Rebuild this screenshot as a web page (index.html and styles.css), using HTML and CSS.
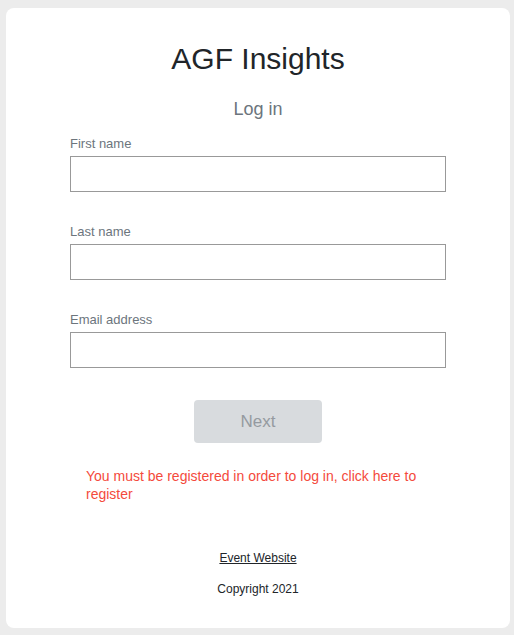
FILE: index.html
```html
<!DOCTYPE html>
<html>
<head>
<meta charset="utf-8">
<link rel="stylesheet" href="styles.css">
</head>
<body>
<main class="card">
  <h1 class="title">AGF Insights</h1>
  <h2 class="subtitle">Log in</h2>
  <form class="form">
    <div class="field">
      <label class="label">First name</label>
      <input class="input" type="text">
    </div>
    <div class="field">
      <label class="label">Last name</label>
      <input class="input" type="text">
    </div>
    <div class="field">
      <label class="label">Email address</label>
      <input class="input" type="email">
    </div>
    <div class="actions">
      <button class="btn" type="button">Next</button>
    </div>
    <p class="error">You must be registered in order to log in, click here to register</p>
  </form>
  <footer class="footer">
    <a class="link" href="#">Event Website</a>
    <p class="copy">Copyright 2021</p>
  </footer>
</main>
</body>
</html>
```

FILE: styles.css
```css
* { box-sizing: border-box; }
html, body { height: 100%; }
body {
  margin: 0;
  padding: 8px 4px 7px 6px;
  background: #ececec;
  font-family: "Liberation Sans", Arial, sans-serif;
  color: #212529;
}
.card {
  background: #fff;
  border-radius: 8px;
  height: 620px;
  display: flex;
  flex-direction: column;
  align-items: center;
  padding-top: 33px;
}
.title {
  margin: 0;
  font-size: 30px;
  font-weight: 400;
  line-height: 36px;
  color: #212529;
}
.subtitle {
  margin: 21px 0 0;
  font-size: 18px;
  font-weight: 400;
  line-height: 22px;
  color: #6c757d;
}
.form {
  width: 376px;
  margin-top: 16px;
  display: flex;
  flex-direction: column;
}
.field {
  display: flex;
  flex-direction: column;
  margin-bottom: 32px;
}
.label {
  font-size: 13px;
  line-height: 16px;
  color: #6c757d;
  margin-bottom: 4px;
}
.input {
  height: 36px;
  border: 1px solid #999;
  border-radius: 0;
  margin: 0;
}
.actions {
  display: flex;
  justify-content: center;
}
.btn {
  width: 128px;
  height: 43px;
  border: none;
  border-radius: 4px;
  background: #d8dbde;
  color: #959aa0;
  font-family: "Liberation Sans", Arial, sans-serif;
  font-size: 17px;
}
.error {
  margin: 24px 16px 0;
  font-size: 14px;
  line-height: 18px;
  color: #f44a3c;
}
.footer {
  margin-top: 48px;
  display: flex;
  flex-direction: column;
  align-items: center;
}
.link {
  font-size: 12px;
  line-height: 14px;
  color: #212529;
  text-decoration: underline;
}
.copy {
  margin: 17px 0 0;
  font-size: 12px;
  line-height: 14px;
}
```
